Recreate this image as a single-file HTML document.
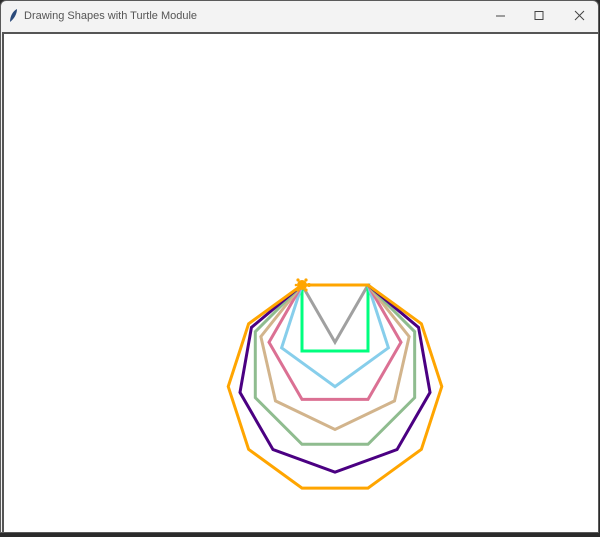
<!DOCTYPE html>
<html><head><style>
html,body{margin:0;padding:0;width:600px;height:537px;overflow:hidden;background:#2b2b2b;font-family:"Liberation Sans",sans-serif}
.win{position:absolute;left:0;top:0;width:599px;height:533px;background:#f3f3f3;border-radius:6px 6px 0 0;border:1px solid #5a5a5a;box-sizing:border-box;overflow:hidden}
.title{position:absolute;left:23px;top:9px;font-size:11px;color:#555}
.canvas{position:absolute;left:1px;top:31px;width:596px;height:502px;background:#fff;border-top:2px solid #555;border-left:2px solid #555;box-sizing:border-box}
</style></head><body>
<div class="win">
<svg style="position:absolute;left:6px;top:7px" width="12" height="16"><path d="M3 14 C3 8 6 3 10 1 C10 6 7 11 3 14Z" fill="#2a4a7a"/></svg>
<div class="title">Drawing Shapes with Turtle Module</div>
<svg style="position:absolute;left:490px;top:8px" width="100" height="14">
<line x1="5" y1="7" x2="14" y2="7" stroke="#444" stroke-width="1"/>
<rect x="44" y="2.5" width="8" height="8" fill="none" stroke="#444" stroke-width="1"/>
<path d="M84 2 L93 11 M93 2 L84 11" stroke="#444" stroke-width="1"/>
</svg>
<div class="canvas"></div>
</div>
<svg style="position:absolute;left:0;top:0" width="600" height="537" fill="none" stroke-width="3" stroke-linejoin="miter">
<polygon stroke="#a0a0a0" points="302,285 368,285 335,342.2"/>
<polygon stroke="#00ff7f" points="302,285 368,285 368,351 302,351"/>
<polygon stroke="#87ceeb" points="302,285 368,285 388.4,347.8 335,386.6 281.6,347.8"/>
<polygon stroke="#db7093" points="302,285 368,285 401,342.2 368,399.4 302,399.4 269,342.2"/>
<polygon stroke="#d2b48c" points="302,285 368,285 409.15,336.6 394.5,400.9 335,429.5 275.5,400.9 260.85,336.6"/>
<polygon stroke="#8fbc8f" points="302,285 368,285 414.67,331.67 414.67,397.67 368,444.3 302,444.3 255.3,397.67 255.3,331.67"/>
<polygon stroke="#4b0082" points="302,285 368,285 418.56,327.42 430.02,392.42 397.02,449.58 335,472.15 272.98,449.58 239.98,392.42 251.44,327.42"/>
<polygon stroke="#ffa500" points="302,285 368,285 421.39,323.79 441.78,386.56 421.39,449.33 368,488.12 302,488.12 248.61,449.33 228.22,386.56 248.61,323.79"/>
<g fill="#ffa500" stroke="none">
<circle cx="302" cy="285" r="5"/>
<circle cx="309" cy="285" r="2"/>
<circle cx="298" cy="280" r="1.6"/><circle cx="306" cy="280" r="1.6"/>
<circle cx="298" cy="290" r="1.6"/><circle cx="306" cy="290" r="1.6"/>
<circle cx="296" cy="285" r="1.3"/>
</g>
</svg>
</body></html>
